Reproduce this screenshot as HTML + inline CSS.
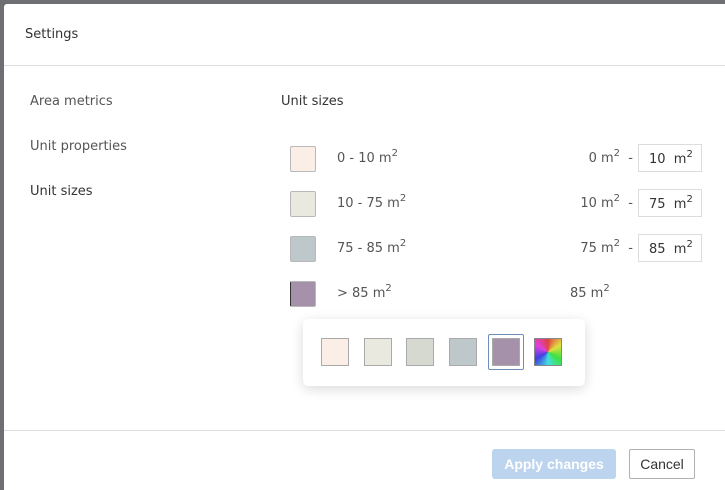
<!DOCTYPE html>
<html><head><style>
body{margin:0;width:725px;height:490px;background:#6d6f72;position:relative;overflow:hidden;font-family:"DejaVu Sans",sans-serif;color:#3c3c3c}
.dlg{position:absolute;left:4px;top:4px;width:721px;height:486px;background:#fff;border-radius:3px 0 0 0}
.a{position:absolute;white-space:nowrap}
.hr{position:absolute;left:4px;right:0;height:1px;background:#dcdcdc}
.sw{position:absolute;width:24px;height:24px;border:1px solid #b8b8b8;border-radius:2px}
.lbl{font-size:13px;color:#555}
sup{font-size:10px;vertical-align:6px;line-height:0}
.inp{position:absolute;left:638px;width:64px;height:28px;border:1px solid #dcdcdc;box-sizing:border-box;font-size:13px;line-height:29px;padding-left:10px;color:#333}
.ps{position:absolute;top:338px;width:28px;height:28px;border:1px solid #aaa;box-sizing:border-box}
</style></head><body>
<div class="dlg"></div>
<div class="a" style="left:25px;top:27px;font-size:13px;color:#333">Settings</div>
<div class="hr" style="top:65px"></div>
<div class="a lbl" style="left:30px;top:94px">Area metrics</div>
<div class="a lbl" style="left:30px;top:139px">Unit properties</div>
<div class="a" style="left:30px;top:184px;font-size:13px;color:#333">Unit sizes</div>
<div class="a" style="left:281px;top:94px;font-size:13px;color:#333">Unit sizes</div>

<div class="sw" style="left:290px;top:146px;background:#faeee6"></div>
<div class="sw" style="left:290px;top:191px;background:#e9e9e0"></div>
<div class="sw" style="left:290px;top:236px;background:#bec7ca"></div>
<div class="sw" style="left:290px;top:281px;background:#a691ab;border-left:1px solid #333"></div>

<div class="a lbl" style="left:337px;top:151px">0 - 10 m<sup>2</sup></div>
<div class="a lbl" style="left:337px;top:196px">10 - 75 m<sup>2</sup></div>
<div class="a lbl" style="left:337px;top:241px">75 - 85 m<sup>2</sup></div>
<div class="a lbl" style="left:337px;top:286px">&gt; 85 m<sup>2</sup></div>

<div class="a lbl" style="right:92px;top:151px">0 m<sup>2</sup> &nbsp;-</div>
<div class="a lbl" style="right:92px;top:196px">10 m<sup>2</sup> &nbsp;-</div>
<div class="a lbl" style="right:92px;top:241px">75 m<sup>2</sup> &nbsp;-</div>
<div class="a lbl" style="left:570px;top:286px">85 m<sup>2</sup></div>

<div class="inp" style="top:144px">10 &nbsp;m<sup>2</sup></div>
<div class="inp" style="top:189px">75 &nbsp;m<sup>2</sup></div>
<div class="inp" style="top:234px">85 &nbsp;m<sup>2</sup></div>

<div class="a" style="left:303px;top:319px;width:282px;height:67px;background:#fff;border-radius:5px;box-shadow:0 3px 12px rgba(0,0,0,.15)"></div>
<div class="ps" style="left:321px;background:#faeee6"></div>
<div class="ps" style="left:364px;background:#e9e9e0"></div>
<div class="ps" style="left:406px;background:#d6d9cf"></div>
<div class="ps" style="left:449px;background:#bec7ca"></div>
<div class="a" style="left:488px;top:334px;width:36px;height:36px;border:1px solid #6b8fb8;box-sizing:border-box;border-radius:2px"></div>
<div class="ps" style="left:492px;background:#a691ab"></div>
<div class="ps" style="left:534px;background:conic-gradient(from 0deg,#e04040,#e0e040,#40e040,#40e0e0,#4040e0,#e040e0,#e04040);border-color:#888"></div>

<div class="hr" style="top:430px"></div>
<div class="a" style="left:492px;top:449px;width:124px;height:30px;background:#bcd4ee;border-radius:3px;color:#fff;font-size:14px;line-height:30px;text-align:center;font-weight:bold;font-family:'Liberation Sans Narrow','Liberation Sans',sans-serif">Apply changes</div>
<div class="a" style="left:629px;top:449px;width:66px;height:30px;border:1px solid #b0b0b0;box-sizing:border-box;border-radius:2px;font-size:14px;line-height:28px;text-align:center;color:#333;font-family:'Liberation Sans Narrow','Liberation Sans',sans-serif">Cancel</div>
</body></html>
